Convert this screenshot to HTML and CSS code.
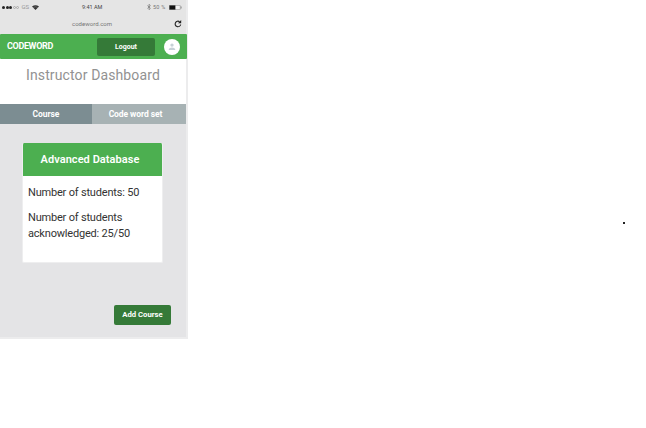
FILE: index.html
```html
<!DOCTYPE html>
<html lang="en">
<head>
<meta charset="utf-8">
<title>Codeword</title>
<link rel="stylesheet" href="styles.css">
</head>
<body>
<main class="phone">
  <div class="status">
    <div class="signal"><i></i><i></i><i></i><i class="off"></i><i class="off"></i><span class="carrier">GS</span>
      <svg class="wifi" width="7" height="5" viewBox="0 0 7 5"><path d="M0 1.6Q3.5-1.2 7 1.6L3.5 5Z" fill="#333"/><path d="M1.2 2.5Q3.5 1 5.8 2.5" fill="none" stroke="#aaa" stroke-width=".4"/></svg>
    </div>
    <span class="clock">9:41 AM</span>
    <div class="power">
      <svg width="4" height="6" viewBox="0 0 4 6"><path d="M.4 1.5 3.4 4.4 2 5.7V.3L3.4 1.6.4 4.5" fill="none" stroke="#777" stroke-width=".7"/></svg>
      <span class="percent">50 %</span>
      <svg width="13" height="5" viewBox="0 0 13 5"><rect x=".3" y=".3" width="11" height="4.4" rx=".7" fill="#f2f2f2" stroke="#777" stroke-width=".5"/><path d="M.4.4H6.4V4.6H.4Z" fill="#111"/><path d="M12.2 1.5V3.5" stroke="#777" stroke-width=".7"/></svg>
    </div>
  </div>
  <div class="address">
    <span class="url">codeword.com</span>
    <svg class="reload" width="8" height="8" viewBox="0 0 8 8"><path d="M5.6 1.7A2.8 2.8 0 1 0 6.7 4.5" fill="none" stroke="#222" stroke-width="1.1"/><path d="M7.2 0V3.2H4Z" fill="#222"/></svg>
  </div>
  <header class="bar">
    <span class="brand">CODEWORD</span>
    <button class="button logout">Logout</button>
    <svg class="avatar" width="16" height="16" viewBox="0 0 16 16"><circle cx="8" cy="8" r="8" fill="#fff"/><circle cx="8" cy="6.1" r="1.7" fill="#c6d0d6"/><path d="M4.8 11V10.2Q5.2 8.6 8 8.6T11.2 10.2V11Z" fill="#c6d0d6"/></svg>
  </header>
  <h1 class="title">Instructor Dashboard</h1>
  <nav class="tabs"><span class="tab active">Course</span><span class="tab">Code word set</span></nav>
  <section class="content">
    <article class="card">
      <h2 class="card-title">Advanced Database</h2>
      <div class="card-body">
        <p class="students">Number of students: 50</p>
        <p class="acknowledged">Number of students<br>acknowledged: 25/50</p>
      </div>
    </article>
    <button class="button add">Add Course</button>
  </section>
</main>
<span class="dot"></span>
</body>
</html>
```
FILE: styles.css
```css
* { box-sizing: border-box; }
body { margin: 0; background: #fff; font-family: Roboto, sans-serif; position: relative; height: 428px; overflow: hidden; }
svg { display: block; flex: none; }
h1, h2, p { margin: 0; }
.phone { width: 188px; height: 339px; background: #e4e4e6; border: solid #ececed; border-width: 0 2px 2px 0; display: flex; flex-direction: column; }
.status { height: 14px; display: grid; grid-template-columns: 82px 1fr 39px; align-items: center; color: #444; font-size: 5.5px; line-height: 8px; background: #e5e5e5; }
.signal { display: flex; align-items: center; padding-left: 2px; }
.signal i { width: 3px; height: 3px; border-radius: 50%; background: #222; margin-right: .5px; }
.signal .off { background: #e5e5e5; border: .5px solid #aaa; }
.carrier { color: #999; margin: 0 2px 0 2px; width: 8px; font-size: 6px; }
.clock { white-space: nowrap; }
.power { display: flex; align-items: center; gap: 2px; }
.percent { width: 14px; color: #777; letter-spacing: .2px; white-space: nowrap; }
.address { height: 20px; background: #e5e5e5; display: grid; grid-template-columns: 72px 1fr 12px; align-items: center; }
.url { grid-column: 2; color: #777; font-size: 6px; letter-spacing: .02px; line-height: 20px; }
.bar { width: 187px; height: 25px; background: #4caf50; display: flex; align-items: center; padding-left: 7px; border-radius: 1px; }
.brand { width: 90px; color: #fff; font-size: 9px; font-weight: 700; letter-spacing: -.35px; line-height: 22px; padding-bottom: 1px; }
.button { border: 0; border-radius: 2px; padding: 0; color: #fff; background: #357a38; font: 700 7px/18px Roboto, sans-serif; }
.logout { width: 58px; height: 18px; margin-right: 9px; }
.title { height: 45px; background: #fff; color: #929292; font-size: 14px; font-weight: 400; line-height: 33px; text-align: center; letter-spacing: .12px; }
.tabs { height: 20px; display: grid; grid-template-columns: 92px 1fr; color: #fff; font-size: 8.5px; font-weight: 700; letter-spacing: -.07px; line-height: 20px; text-align: center; }
.tab { background: #a7b2b4; padding-right: 7px; }
.tab.active { background: #7c8d92; padding: 0; }
.content { flex: 1; display: flex; flex-direction: column; padding: 19px 15px 12px 22px; }
.card { width: 141px; height: 120px; background: #fff; border: 1px solid #eeeeef; border-top: 0; border-radius: 2px; overflow: hidden; }
.card-title { height: 33px; margin: 0 -1px; background: #4caf50; color: #fff; font-size: 11px; font-weight: 600; line-height: 33px; letter-spacing: .05px; padding-right: 5px; text-align: center; }
.card-body { padding: 9px 5px; color: #333; font-size: 11px; letter-spacing: -.19px; line-height: 16px; }
.students { margin-bottom: 9px; }
.add { align-self: flex-end; width: 57px; height: 20px; margin-top: auto; font-size: 7.7px; line-height: 20px; }
.dot { position: absolute; left: 623px; top: 222px; width: 2px; height: 2px; background: #222; }
```
